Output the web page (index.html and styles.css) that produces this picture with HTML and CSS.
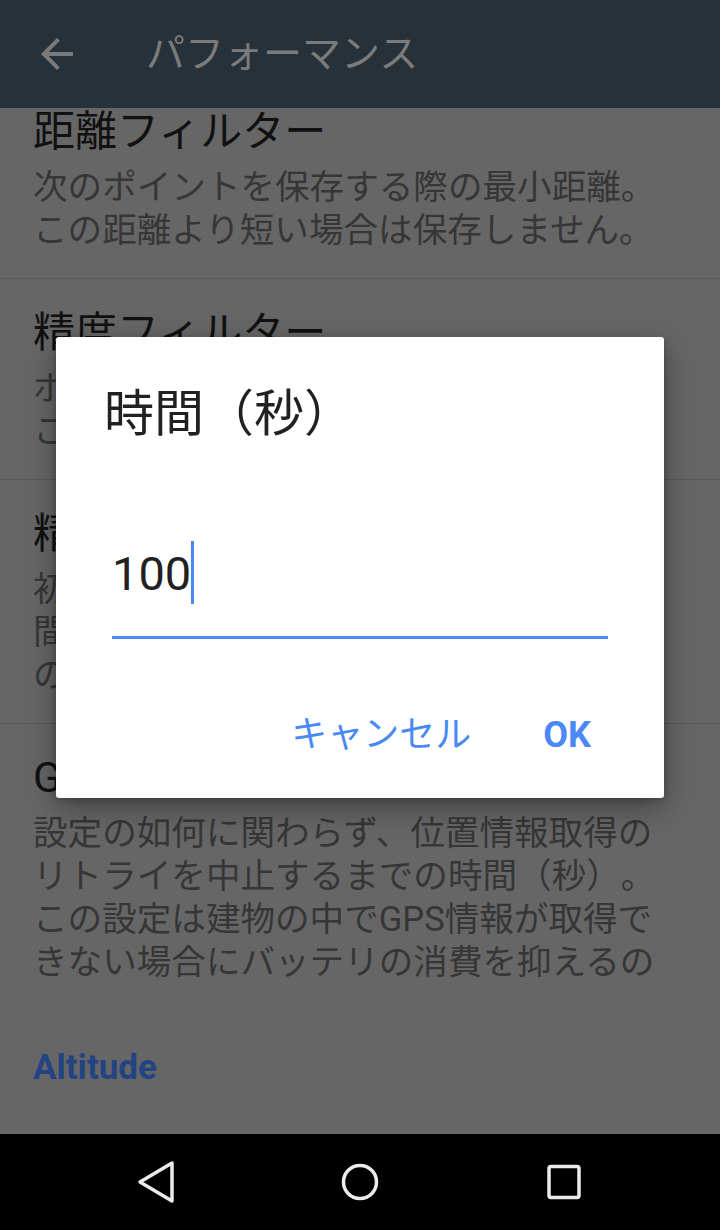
FILE: index.html
```html
<!DOCTYPE html>
<html lang="ja">
<head>
<meta charset="utf-8">
<title>パフォーマンス</title>
<link rel="stylesheet" href="styles.css">
</head>
<body>
<div class="screen">
  <header class="appbar">
    <svg class="appbar-back" viewBox="0 0 24 24" width="48" height="48" aria-hidden="true">
      <path d="M20 11H7.83l5.59-5.59L12 4l-8 8 8 8 1.41-1.41L7.83 13H20v-2z"/>
    </svg>
    <h1 class="appbar-title">パフォーマンス</h1>
  </header>

  <main class="content">
    <div class="pref-list">
      <div class="pref">
        <div class="pref-title">距離フィルター</div>
        <div class="pref-summary">次のポイントを保存する際の最小距離。この距離より短い場合は保存しません。</div>
      </div>
      <div class="pref">
        <div class="pref-title">精度フィルター</div>
        <div class="pref-summary">ポイントの精度がこの値を超える場合はこのポイントを保存しません。</div>
      </div>
      <div class="pref">
        <div class="pref-title">精度フィルター（初回）</div>
        <div class="pref-summary">初回の位置情報を取得するまでの待ち時間。この時間を過ぎると精度を緩和するのに役立ちます。</div>
      </div>
      <div class="pref pref-last">
        <div class="pref-title">GPSタイムアウト</div>
        <div class="pref-summary clamp">設定の如何に関わらず、位置情報取得のリトライを中止するまでの時間（秒）。この設定は建物の中でGPS情報が取得できない場合にバッテリの消費を抑えるのに役立ちます。</div>
      </div>
      <div class="pref-category">Altitude</div>
    </div>

    <div class="dialog" role="dialog">
      <div class="dialog-title">時間（秒）</div>
      <div class="dialog-field">
        <span class="field-value">100</span><span class="field-cursor"></span>
      </div>
      <div class="dialog-actions">
        <span class="dialog-btn">キャンセル</span>
        <span class="dialog-btn dialog-btn-ok">OK</span>
      </div>
    </div>
  </main>

  <nav class="navbar">
    <svg class="nav-icon" viewBox="0 0 48 48" width="48" height="48" aria-hidden="true">
      <polygon points="8,24 40,5 40,43"/>
    </svg>
    <svg class="nav-icon" viewBox="0 0 48 48" width="48" height="48" aria-hidden="true">
      <circle cx="24" cy="24" r="16.5"/>
    </svg>
    <svg class="nav-icon" viewBox="0 0 48 48" width="48" height="48" aria-hidden="true">
      <rect x="9" y="8.5" width="30" height="31" rx="2"/>
    </svg>
  </nav>
</div>
</body>
</html>
```

FILE: styles.css
```css
html, body {
  margin: 0;
  padding: 0;
}

body {
  font-family: Roboto, "Noto Sans CJK JP", sans-serif;
  background: #666666;
  text-spacing-trim: space-all;
}

.screen {
  width: 720px;
  height: 1230px;
  display: flex;
  flex-direction: column;
  overflow: hidden;
}

/* App bar (dimmed by the dialog scrim) */
.appbar {
  flex: 0 0 108px;
  height: 108px;
  background: #263139;
  display: flex;
  align-items: center;
  padding-left: 33px;
  gap: 65px;
  position: relative;
  z-index: 2;
}

.appbar-back {
  fill: #7a7a7a;
  flex: 0 0 auto;
}

.appbar-title {
  margin: 0;
  font-weight: 400;
  font-size: 39px;
  line-height: 56px;
  color: #7b7b7b;
}

/* Content area */
.content {
  flex: 1 1 auto;
  position: relative;
  overflow: hidden;
  background: #666666;
}

.pref-list {
  margin-top: -30px;
}

.pref {
  padding: 26px 40px 26px 33px;
  border-bottom: 1px solid #595959;
}

.pref-last {
  border-bottom: none;
}

.pref-title {
  font-size: 42px;
  line-height: 56px;
  color: #111111;
  white-space: nowrap;
}

.pref-summary {
  margin-top: 6px;
  font-size: 34.6px;
  line-height: 43px;
  color: #363636;
}

.clamp {
  max-height: 172px;
  overflow: hidden;
}

.pref-category {
  padding: 38px 33px 0;
  font-size: 35px;
  line-height: 40px;
  font-weight: 700;
  color: #234482;
}

/* Dialog */
.dialog {
  position: absolute;
  top: 229px;
  left: 56px;
  width: 608px;
  height: 461px;
  box-sizing: border-box;
  background: #ffffff;
  border-radius: 3px;
  box-shadow: 0 10px 30px rgba(0, 0, 0, 0.35), 0 2px 6px rgba(0, 0, 0, 0.2);
  padding: 49px 0 39px;
  display: flex;
  flex-direction: column;
}

.dialog-title {
  padding: 0 48px;
  font-size: 50px;
  line-height: 56px;
  color: #212121;
}

.dialog-field {
  margin: 99px 56px 0;
  height: 63px;
  padding-bottom: 32px;
  border-bottom: 3px solid #4a89f5;
  display: flex;
  align-items: stretch;
}

.field-value {
  font-family: Roboto, sans-serif;
  font-size: 47px;
  line-height: 66px;
  color: #212121;
}

.field-cursor {
  width: 3px;
  margin-left: 0;
  background: #4a89f5;
}

.dialog-actions {
  margin-top: 72px;
  display: flex;
  justify-content: flex-end;
  gap: 40px;
  padding-right: 57px;
}

.dialog-btn {
  padding: 0 16px;
  font-size: 36px;
  line-height: 48px;
  color: #4a89f5;
}

.dialog-btn-ok {
  font-weight: 700;
}

/* Navigation bar */
.navbar {
  flex: 0 0 96px;
  height: 96px;
  background: #000000;
  display: flex;
  align-items: center;
  justify-content: center;
  gap: 156px;
}

.nav-icon {
  fill: none;
  stroke: #ececec;
  stroke-width: 3.5;
  stroke-linejoin: round;
}
```
